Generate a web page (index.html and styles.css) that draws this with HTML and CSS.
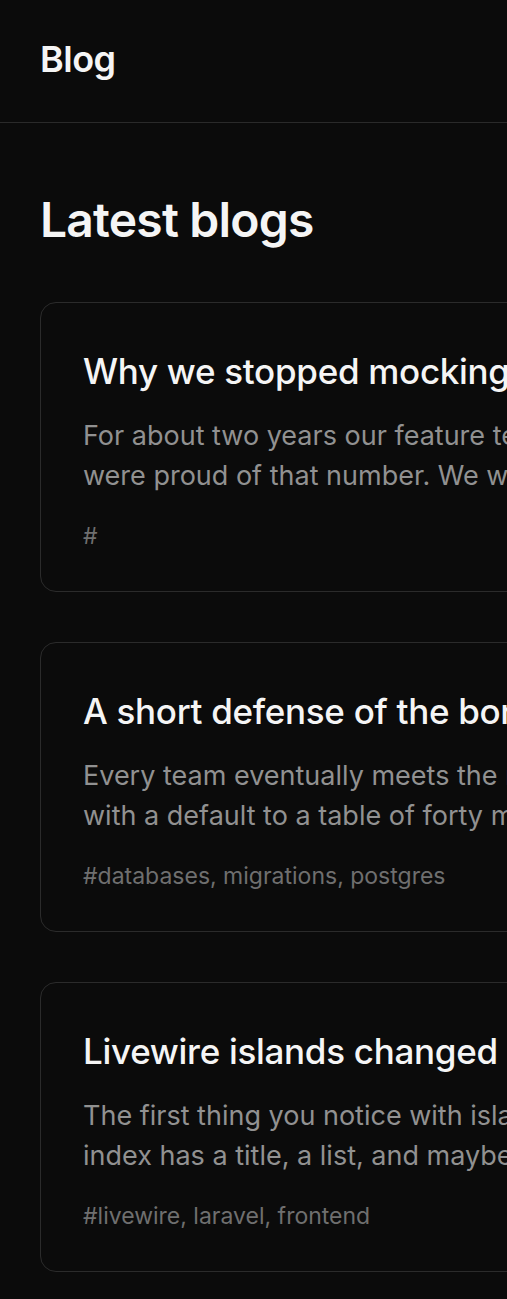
FILE: index.html
```html
<!DOCTYPE html>
<html lang="en">
<head>
    <meta charset="UTF-8">
    <meta name="viewport" content="width=device-width, initial-scale=1.0">
    <title>Blog</title>
    <link rel="stylesheet" href="styles.css">
</head>
<body>
<header class="site-header">
    <a href="/" class="brand">Blog</a>
</header>

<main class="content">
    <h1 class="page-title">Latest blogs</h1>

    <div class="post-list">
        <article class="post-card">
            <h2 class="post-title">Why we stopped mocking the database</h2>
            <p class="post-excerpt">For about two years our feature tests ran green and we
were proud of that number. We were also shipping bugs.</p>
            <p class="post-tags">#</p>
        </article>

        <article class="post-card">
            <h2 class="post-title">A short defense of the boring migration</h2>
            <p class="post-excerpt">Every team eventually meets the migration that adds a column
with a default to a table of forty million rows.</p>
            <p class="post-tags">#databases, migrations, postgres</p>
        </article>

        <article class="post-card">
            <h2 class="post-title">Livewire islands changed how we build pages</h2>
            <p class="post-excerpt">The first thing you notice with islands is that every
index has a title, a list, and maybe a filter bar.</p>
            <p class="post-tags">#livewire, laravel, frontend</p>
        </article>
    </div>
</main>
</body>
</html>
```

FILE: styles.css
```css
html, body {
    margin: 0;
    overflow-x: hidden;
}

body {
    background-color: #0b0b0b;
    color: #f5f5f5;
    font-family: "Inter", "Noto Sans", sans-serif;
}

.site-header {
    display: flex;
    align-items: center;
    height: 123px;
    padding: 0 40px 4px;
    box-sizing: border-box;
    border-bottom: 1px solid #2a2a2a;
}

.brand {
    color: #f5f5f5;
    text-decoration: none;
    font-size: 36px;
    font-weight: 600;
    letter-spacing: -0.5px;
}

.content {
    padding: 0 40px 40px;
}

.page-title {
    margin: 69px 0 54px;
    font-size: 48px;
    font-weight: 600;
    line-height: 56px;
    letter-spacing: -0.8px;
}

.post-list {
    display: flex;
    flex-direction: column;
    gap: 50px;
}

/* cards are wider than small screens, the page just clips them */
.post-card {
    width: 1040px;
    box-sizing: border-box;
    padding: 46px 42px 39px;
    border: 1px solid #2b2b2b;
    border-radius: 16px;
}

.post-title {
    margin: 0 0 23px;
    font-size: 35px;
    font-weight: 500;
    line-height: 44px;
    white-space: nowrap;
    letter-spacing: -0.3px;
}

/* excerpt keeps its own line breaks */
.post-excerpt {
    margin: 0 0 24px;
    color: #919191;
    font-size: 27px;
    line-height: 40px;
    white-space: pre-line;
}

.post-tags {
    margin: 0;
    color: #6f6f6f;
    font-size: 23px;
    line-height: 32px;
}
```
